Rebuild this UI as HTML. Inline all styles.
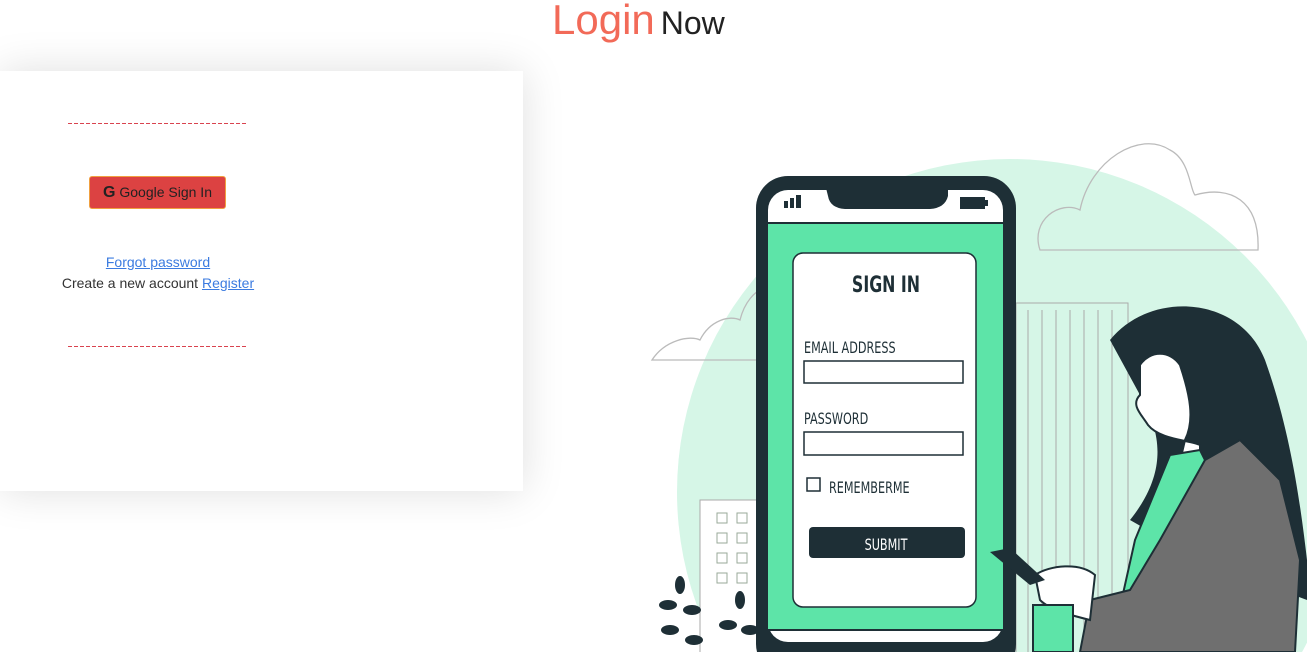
<!DOCTYPE html>
<html><head><meta charset="utf-8"><style>
*{margin:0;padding:0;box-sizing:border-box}
html,body{width:1307px;height:652px;overflow:hidden}
body{background:#fff;font-family:"Liberation Sans",sans-serif;position:relative}
.title{position:absolute;top:-4px;left:552px;white-space:nowrap}
.title .a{color:#f26a58;font-size:42px}
.title .b{color:#222;font-size:32px;margin-left:6px}
.card{position:absolute;left:0;top:71px;width:523px;height:420px;background:#fff;box-shadow:0 0 40px rgba(0,0,0,.13)}
.dash{position:absolute;left:68px;width:178px;height:1px;background:repeating-linear-gradient(90deg,#d9434f 0 4px,transparent 4px 6px)}
.btn{position:absolute;left:89px;top:176px;width:137px;height:33px;background:#dc4242;border:1px solid #f0a040;border-radius:3px;font-size:14px;color:#222;text-align:center;line-height:31px}
.btn b{font-size:16px}
.links{position:absolute;left:0;width:316px;text-align:center;font-size:14px;color:#333;line-height:21px;top:252px}
.links a{color:#3b7be0;text-decoration:underline}
svg{position:absolute;left:0;top:0}
</style></head><body>
<div class="title"><span class="a">Login</span><span class="b">Now</span></div>
<div class="card"></div>
<div class="dash" style="top:123px"></div>
<div class="dash" style="top:346px"></div>
<div class="btn"><b>G</b> Google Sign In</div>
<div class="links"><a>Forgot password</a><br>Create a new account <a>Register</a></div>
<svg width="1307" height="652" viewBox="0 0 1307 652">
<circle cx="1010" cy="492" r="333" fill="#d6f6e7"/>
<path d="M1040 250 C1030 220 1060 200 1080 210 C1090 160 1140 130 1170 150 C1190 160 1190 190 1195 195 C1230 185 1260 200 1258 250 Z" fill="none" stroke="#bbb" stroke-width="1.3"/>
<path d="M652 360 C665 340 690 335 700 340 C710 320 730 315 740 320 C745 300 756 292 760 290 L760 360 Z" fill="none" stroke="#bbb" stroke-width="1.3"/>
<rect x="1016" y="303" width="112" height="360" fill="#d6f6e7" stroke="#aaa"/>
<g stroke="#aaa" stroke-width="1">
<line x1="1028" y1="310" x2="1028" y2="652"/><line x1="1042" y1="310" x2="1042" y2="652"/><line x1="1056" y1="310" x2="1056" y2="652"/><line x1="1070" y1="310" x2="1070" y2="652"/><line x1="1084" y1="310" x2="1084" y2="652"/><line x1="1098" y1="310" x2="1098" y2="652"/><line x1="1112" y1="310" x2="1112" y2="652"/></g>
<rect x="700" y="500" width="60" height="160" fill="#fff" stroke="#aaa"/>
<g fill="none" stroke="#9a9" stroke-width="1">
<rect x="717" y="513" width="10" height="10"/><rect x="737" y="513" width="10" height="10"/>
<rect x="717" y="533" width="10" height="10"/><rect x="737" y="533" width="10" height="10"/>
<rect x="717" y="553" width="10" height="10"/><rect x="737" y="553" width="10" height="10"/>
<rect x="717" y="573" width="10" height="10"/><rect x="737" y="573" width="10" height="10"/></g>
<g fill="#1e2f36"><ellipse cx="680" cy="585" rx="5" ry="9"/><ellipse cx="668" cy="605" rx="9" ry="5"/><ellipse cx="692" cy="610" rx="9" ry="5"/><ellipse cx="670" cy="630" rx="9" ry="5"/><ellipse cx="694" cy="640" rx="9" ry="5"/><ellipse cx="740" cy="600" rx="5" ry="9"/><ellipse cx="728" cy="625" rx="9" ry="5"/><ellipse cx="750" cy="630" rx="9" ry="5"/></g>
<rect x="756" y="176" width="260" height="500" rx="32" fill="#1e2f36"/>
<rect x="768" y="190" width="235" height="452" rx="20" fill="#fff"/>
<rect x="768" y="223" width="235" height="407" fill="#5de4a8"/>
<line x1="768" y1="223" x2="1003" y2="223" stroke="#1e2f36" stroke-width="2"/>
<line x1="768" y1="630" x2="1003" y2="630" stroke="#1e2f36" stroke-width="2"/>
<path d="M826 188 L948 188 L948 196 Q945 208 930 209 L845 209 Q830 208 828 196 Z" fill="#1e2f36"/>
<rect x="784" y="201" width="4" height="7" fill="#1e2f36"/><rect x="790" y="198" width="4" height="10" fill="#1e2f36"/><rect x="796" y="195" width="5" height="13" fill="#1e2f36"/>
<rect x="960" y="197" width="25" height="12" fill="#1e2f36"/><rect x="985" y="200" width="3" height="6" fill="#1e2f36"/>
<rect x="793" y="253" width="183" height="354" rx="10" fill="#fff" stroke="#1e2f36" stroke-width="1.5"/>
<g font-family="'DejaVu Sans Condensed','Liberation Sans Narrow','Liberation Sans',sans-serif" fill="#1e2f36">
<text x="886" y="292" text-anchor="middle" font-size="22" font-weight="bold" transform="translate(886 0) scale(.8 1) translate(-886 0)">SIGN IN</text>
<text x="804" y="353" font-size="16" transform="translate(804 0) scale(.78 1) translate(-804 0)">EMAIL ADDRESS</text>
<text x="804" y="424" font-size="16" transform="translate(804 0) scale(.78 1) translate(-804 0)">PASSWORD</text>
<text x="829" y="493" font-size="16" transform="translate(829 0) scale(.78 1) translate(-829 0)">REMEMBERME</text>
</g>
<rect x="804" y="361" width="159" height="22" fill="#fff" stroke="#1e2f36" stroke-width="1.5"/>
<rect x="804" y="432" width="159" height="23" fill="#fff" stroke="#1e2f36" stroke-width="1.5"/>
<rect x="807" y="478" width="13" height="13" fill="#fff" stroke="#1e2f36" stroke-width="1.5"/>
<rect x="809" y="527" width="156" height="31" rx="4" fill="#1e2f36"/>
<text x="886" y="550" text-anchor="middle" font-size="16" fill="#fff" font-family="'DejaVu Sans Condensed',sans-serif" transform="translate(886 0) scale(.78 1) translate(-886 0)">SUBMIT</text>
<path d="M1110 340 C1150 290 1240 295 1265 360 C1290 430 1300 500 1307 560 L1307 600 L1200 560 L1130 520 C1170 470 1160 430 1140 395 Z" fill="#1e2f36"/>
<path d="M1140 365 C1150 350 1170 350 1180 365 C1190 395 1195 420 1185 440 L1178 470 L1200 468 L1200 445 C1190 440 1160 440 1148 425 C1142 415 1130 405 1140 395 Z" fill="#fff" stroke="#1e2f36" stroke-width="2"/>
<path d="M1170 455 L1200 450 L1210 470 L1150 600 L1120 652 L1110 652 L1135 540 Z" fill="#5de4a8" stroke="#1e2f36" stroke-width="2"/>
<path d="M1205 460 L1240 440 L1280 480 L1300 560 L1295 652 L1080 652 L1090 600 L1130 590 L1160 540 Z" fill="#6f6f6f" stroke="#1e2f36" stroke-width="2"/>
<path d="M1035 575 C1050 565 1080 562 1095 575 L1090 620 C1070 615 1050 610 1040 600 Z" fill="#fff" stroke="#1e2f36" stroke-width="2"/>
<path d="M990 552 L1010 548 L1045 580 L1030 585 Z" fill="#1e2f36"/>
<rect x="1033" y="605" width="40" height="47" fill="#5de4a8" stroke="#1e2f36" stroke-width="2"/>
</svg>
</body></html>
